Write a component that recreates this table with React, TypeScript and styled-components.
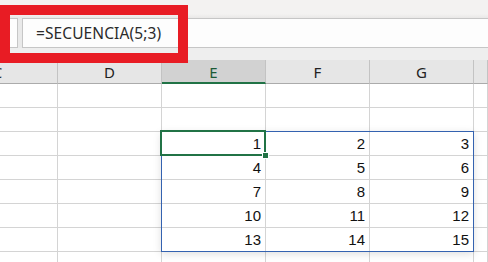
import React from "react";
import styled, { createGlobalStyle } from "styled-components";

const GlobalStyle = createGlobalStyle`
  html, body {
    margin: 0;
    padding: 0;
    background: #ffffff;
    overflow: hidden;
  }
  * { box-sizing: border-box; }
`;

const Screen = styled.div`
  position: relative;
  width: 488px;
  height: 262px;
  overflow: hidden;
  background: #ffffff;
  font-family: "Noto Sans", "Liberation Sans", sans-serif;
`;

const RibbonEdge = styled.div`
  height: 18px;
  background: linear-gradient(#f3f2f1 0, #f3f2f1 14px, #e9e8e7 18px);
`;

const FormulaBar = styled.div`
  display: flex;
  height: 30px;
  background: #e9e9e9;
`;

const NameBox = styled.div`
  width: 18px;
  background: #fdfdfd;
  border: 1px solid #c6c6c6;
  border-left: none;
`;

const FormulaInput = styled.div`
  flex: 1;
  margin-left: 4px;
  background: #fdfdfd;
  border: 1px solid #c6c6c6;
  border-right: none;
  display: flex;
  align-items: center;
  padding-left: 13px;
  font-size: 15.5px;
  color: #2b2b2b;
  letter-spacing: 0.1px;
`;

const Gap = styled.div`
  height: 12px;
  background: #eeeeee;
`;

const Sheet = styled.div`
  display: grid;
  grid-template-columns: 120px 104px 104px 104px 104px 1fr;
  grid-auto-rows: 24px;
  margin-left: -62px;
`;

const ColumnHeader = styled.div<{ $active?: boolean }>`
  display: flex;
  align-items: center;
  justify-content: center;
  background: ${(p) => (p.$active ? "#d2d2d2" : "#e6e6e6")};
  border-right: 1px solid #c3c3c3;
  border-bottom: ${(p) => (p.$active ? "2px solid #217346" : "1px solid #ababab")};
  padding-top: ${(p) => (p.$active ? "1px" : "0")};
  font-size: 15px;
  color: ${(p) => (p.$active ? "#1c5a37" : "#222222")};
`;

const Cell = styled.div<{ $anchor?: boolean }>`
  position: ${(p) => (p.$anchor ? "relative" : "static")};
  display: flex;
  align-items: flex-end;
  justify-content: flex-end;
  padding: 0 4px 2px 0;
  border-right: 1px solid #d4d4d4;
  border-bottom: 1px solid #d4d4d4;
  font-family: "Liberation Sans", "Noto Sans", sans-serif;
  font-size: 15px;
  line-height: 18px;
  color: #111111;
`;

/* outline of the spilled array range */
const SpillRange = styled.div`
  position: absolute;
  top: -1px;
  left: -1px;
  width: 313px;
  height: 121px;
  border: 1px solid #3462b0;
  box-shadow: 0 2px 8px rgba(0, 0, 0, 0.13);
  pointer-events: none;
  z-index: 1;
`;

const ActiveCell = styled.div`
  position: absolute;
  top: -2px;
  left: -2px;
  right: -1px;
  bottom: -1px;
  border: 2px solid #217346;
  pointer-events: none;
  z-index: 2;
`;

const FillHandle = styled.div`
  position: absolute;
  right: -5px;
  bottom: -5px;
  width: 7px;
  height: 7px;
  background: #217346;
  border: 1px solid #ffffff;
`;

const Callout = styled.div`
  position: absolute;
  left: 0;
  top: 5px;
  width: 188px;
  height: 58px;
  border: 10px solid #e81c24;
  pointer-events: none;
  z-index: 5;
`;

const columns = ["C", "D", "E", "F", "G", ""];
const ACTIVE_COL = 2;
const ROWS = 8;
const FIRST_DATA_ROW = 2;
const SPILL_ROWS = 5;
const SPILL_COLS = 3;

function valueAt(row: number, col: number): string {
  const r = row - FIRST_DATA_ROW;
  const c = col - ACTIVE_COL;
  if (r < 0 || r >= SPILL_ROWS || c < 0 || c >= SPILL_COLS) return "";
  return String(r * SPILL_COLS + c + 1);
}

export default function App() {
  return (
    <>
      <GlobalStyle />
      <Screen>
        <RibbonEdge />
        <FormulaBar>
          <NameBox />
          <FormulaInput>=SECUENCIA(5;3)</FormulaInput>
        </FormulaBar>
        <Gap />
        <Sheet>
          {columns.map((c, i) => (
            <ColumnHeader key={`h${i}`} $active={i === ACTIVE_COL}>
              {c}
            </ColumnHeader>
          ))}
          {Array.from({ length: ROWS }).map((_, r) =>
            columns.map((_c, col) => {
              const anchor = r === FIRST_DATA_ROW && col === ACTIVE_COL;
              return (
                <Cell key={`${r}-${col}`} $anchor={anchor}>
                  {valueAt(r, col)}
                  {anchor && (
                    <>
                      <SpillRange />
                      <ActiveCell>
                        <FillHandle />
                      </ActiveCell>
                    </>
                  )}
                </Cell>
              );
            })
          )}
        </Sheet>
        <Callout />
      </Screen>
    </>
  );
}
